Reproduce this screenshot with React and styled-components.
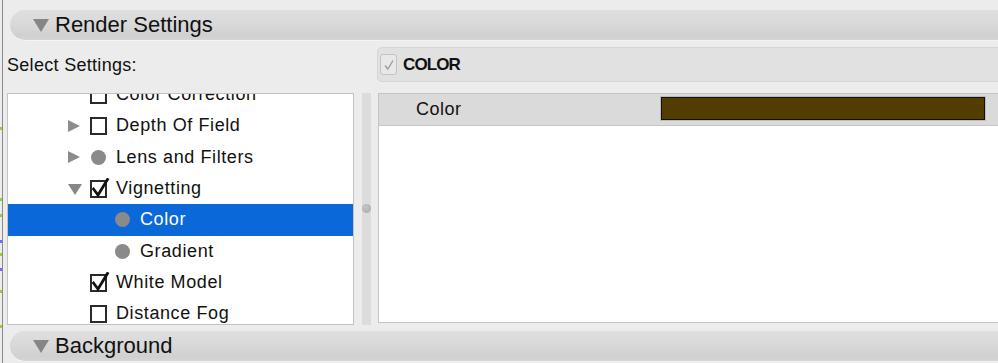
import styled, { createGlobalStyle } from "styled-components";

const GlobalStyle = createGlobalStyle`
  html, body {
    margin: 0;
    padding: 0;
    background: #ececec;
  }
  body {
    font-family: "Liberation Sans", Arial, Helvetica, sans-serif;
    color: #111;
  }
`;

const Page = styled.div`
  display: flex;
  width: 998px;
  height: 363px;
  overflow: hidden;
  background: #ececec;
`;

const EdgeStrip = styled.div`
  width: 2px;
  flex-shrink: 0;
  border-right: 1px solid #8b8b8b;
  svg {
    display: block;
  }
`;

const Main = styled.div`
  flex: 1;
  min-width: 0;
  display: flex;
  flex-direction: column;
  padding: 10px 0 0 4px;
`;

const SectionBar = styled.div`
  display: flex;
  align-items: center;
  gap: 6px;
  height: 30px;
  margin: 0 -20px 0 3px;
  padding-left: 23px;
  border-radius: 15px 0 0 15px;
  background: linear-gradient(#dfdfdf, #d9d9d9 45%, #d0d0d0 85%, #d6d6d6);
  box-shadow: 0 1px 0 #f4f4f4;
  font-size: 22px;
  color: #111;
  flex-shrink: 0;
`;

const DownTriangle = styled.span`
  width: 0;
  height: 0;
  margin-top: 1px;
  border-left: ${(p) => p.$w / 2}px solid transparent;
  border-right: ${(p) => p.$w / 2}px solid transparent;
  border-top: ${(p) => p.$h}px solid #868686;
`;

const RightTriangle = styled.span`
  width: 0;
  height: 0;
  border-top: 6px solid transparent;
  border-bottom: 6px solid transparent;
  border-left: 12px solid #8c8c8c;
`;

const SettingsGrid = styled.div`
  display: grid;
  grid-template-columns: 347px 24px 1fr;
  grid-template-rows: 53px 232px;
  margin-right: -6px;
  flex-shrink: 0;
`;

const SelectLabel = styled.div`
  align-self: start;
  margin-top: 15px;
  font-size: 18px;
  line-height: 20px;
  letter-spacing: 0.3px;
`;

const GroupBox = styled.div`
  grid-column: 3;
  margin: 7px 0 11px -1px;
  display: flex;
  align-items: center;
  gap: 6px;
  padding-left: 2px;
  background: #e1e1e1;
  border: 1px solid #d5d5d5;
  border-radius: 5px 0 0 5px;
  font-size: 17px;
  font-weight: bold;
  letter-spacing: -0.9px;
`;

const DimCheck = styled.span`
  display: flex;
  align-items: center;
  justify-content: center;
  width: 15px;
  height: 19px;
  border: 1px solid #c3c3c3;
  border-radius: 3px;
  background: #e8e8e8;
`;

const TreeBox = styled.div`
  background: #fff;
  border: 1px solid #c3c3c3;
  overflow: hidden;
`;

const TreeRows = styled.div`
  margin-top: -15px;
`;

const Row = styled.div`
  display: flex;
  align-items: center;
  height: 31.33px;
  padding-left: ${(p) => 60 + p.$depth * 24}px;
  background: ${(p) => (p.$selected ? "#0a68d8" : "transparent")};
  color: ${(p) => (p.$selected ? "#fff" : "#111")};
  font-size: 18px;
  letter-spacing: 0.6px;
  white-space: nowrap;
`;

const ExpanderSlot = styled.span`
  display: flex;
  align-items: center;
  width: 22px;
  flex-shrink: 0;
`;

const IconSlot = styled.span`
  display: flex;
  align-items: center;
  width: 26px;
  height: 20px;
  flex-shrink: 0;
`;

const CheckBox = styled.span`
  position: relative;
  width: 13px;
  height: 14px;
  border: 2px solid #2a2a2a;
  background: #fff;
  svg {
    position: absolute;
    left: 0px;
    top: -4px;
  }
`;

const Dot = styled.span`
  width: 15px;
  height: 15px;
  border-radius: 50%;
  background: #8a8a8a;
  margin-left: 1px;
`;

const Splitter = styled.div`
  position: relative;
  margin-left: 8px;
  width: 9px;
  background: #dcdcdc;
`;

const Grip = styled.span`
  position: absolute;
  left: 0;
  top: 111px;
  width: 9px;
  height: 9px;
  border-radius: 50%;
  background: radial-gradient(circle at 40% 35%, #c4c4c4, #a9a9a9);
`;

const DetailBox = styled.div`
  background: #fff;
  border: 1px solid #c4c4c4;
  border-right: none;
  margin-bottom: 2px;
`;

const DetailHeader = styled.div`
  display: flex;
  align-items: center;
  height: 31px;
  border-bottom: 1px solid #c6c6c6;
  background: #dadada;
`;

const DetailLabel = styled.span`
  width: 245px;
  padding-left: 37px;
  font-size: 18px;
  letter-spacing: 0.5px;
  flex-shrink: 0;
`;

const Swatch = styled.span`
  width: 322px;
  height: 21px;
  margin-top: -2px;
  background: ${(p) => p.$color};
  border: 1px solid #111;
  box-shadow: 0 0 0 1px #bcbcbc;
`;

const BottomBar = styled(SectionBar)`
  margin-top: 6px;
`;

const marks = [
  [127, "#9acd32"],
  [198, "#9acd32"],
  [214, "#9acd32"],
  [240, "#6b6bff"],
  [253, "#9acd32"],
  [268, "#6b6bff"],
  [290, "#9acd32"],
  [325, "#9acd32"],
];

const tree = [
  { label: "Color Correction", icon: "box", depth: 0 },
  { label: "Depth Of Field", icon: "box", depth: 0, expander: "right" },
  { label: "Lens and Filters", icon: "dot", depth: 0, expander: "right" },
  { label: "Vignetting", icon: "check", depth: 0, expander: "down" },
  { label: "Color", icon: "dot", depth: 1, selected: true },
  { label: "Gradient", icon: "dot", depth: 1 },
  { label: "White Model", icon: "check", depth: 0 },
  { label: "Distance Fog", icon: "box", depth: 0 },
];

const TreeIcon = ({ kind }) => {
  if (kind === "dot") return <Dot />;
  return (
    <CheckBox>
      {kind === "check" && (
        <svg width="18" height="20" viewBox="0 0 18 20">
          <path
            d="M1.5 11 L6 17 L15.5 1.5"
            fill="none"
            stroke="#111"
            strokeWidth="2.8"
            strokeLinecap="square"
          />
        </svg>
      )}
    </CheckBox>
  );
};

const App = () => {
  return (
    <>
      <GlobalStyle />
      <Page>
        <EdgeStrip>
          <svg width="2" height="363">
            {marks.map(([y, c]) => (
              <rect key={y} x="0" y={y} width="2" height="3" fill={c} />
            ))}
          </svg>
        </EdgeStrip>

        <Main>
          <SectionBar>
            <DownTriangle $w={16} $h={13} />
            Render Settings
          </SectionBar>

          <SettingsGrid>
            <SelectLabel>Select Settings:</SelectLabel>
            <GroupBox>
              <DimCheck>
                <svg width="12" height="12" viewBox="0 0 12 12">
                  <path
                    d="M2 6.5 L4.8 10 L10 1.5"
                    fill="none"
                    stroke="#9a9a9a"
                    strokeWidth="1.3"
                  />
                </svg>
              </DimCheck>
              COLOR
            </GroupBox>

            <TreeBox>
              <TreeRows>
                {tree.map((item) => (
                  <Row
                    key={item.label + item.depth}
                    $depth={item.depth}
                    $selected={item.selected}
                  >
                    <ExpanderSlot>
                      {item.expander === "right" && <RightTriangle />}
                      {item.expander === "down" && (
                        <DownTriangle $w={14} $h={11} />
                      )}
                    </ExpanderSlot>
                    <IconSlot>
                      <TreeIcon kind={item.icon} />
                    </IconSlot>
                    {item.label}
                  </Row>
                ))}
              </TreeRows>
            </TreeBox>

            <Splitter>
              <Grip />
            </Splitter>

            <DetailBox>
              <DetailHeader>
                <DetailLabel>Color</DetailLabel>
                <Swatch $color="#533c00" />
              </DetailHeader>
            </DetailBox>
          </SettingsGrid>

          <BottomBar>
            <DownTriangle $w={16} $h={13} />
            Background
          </BottomBar>
        </Main>
      </Page>
    </>
  );
};

export default App;
